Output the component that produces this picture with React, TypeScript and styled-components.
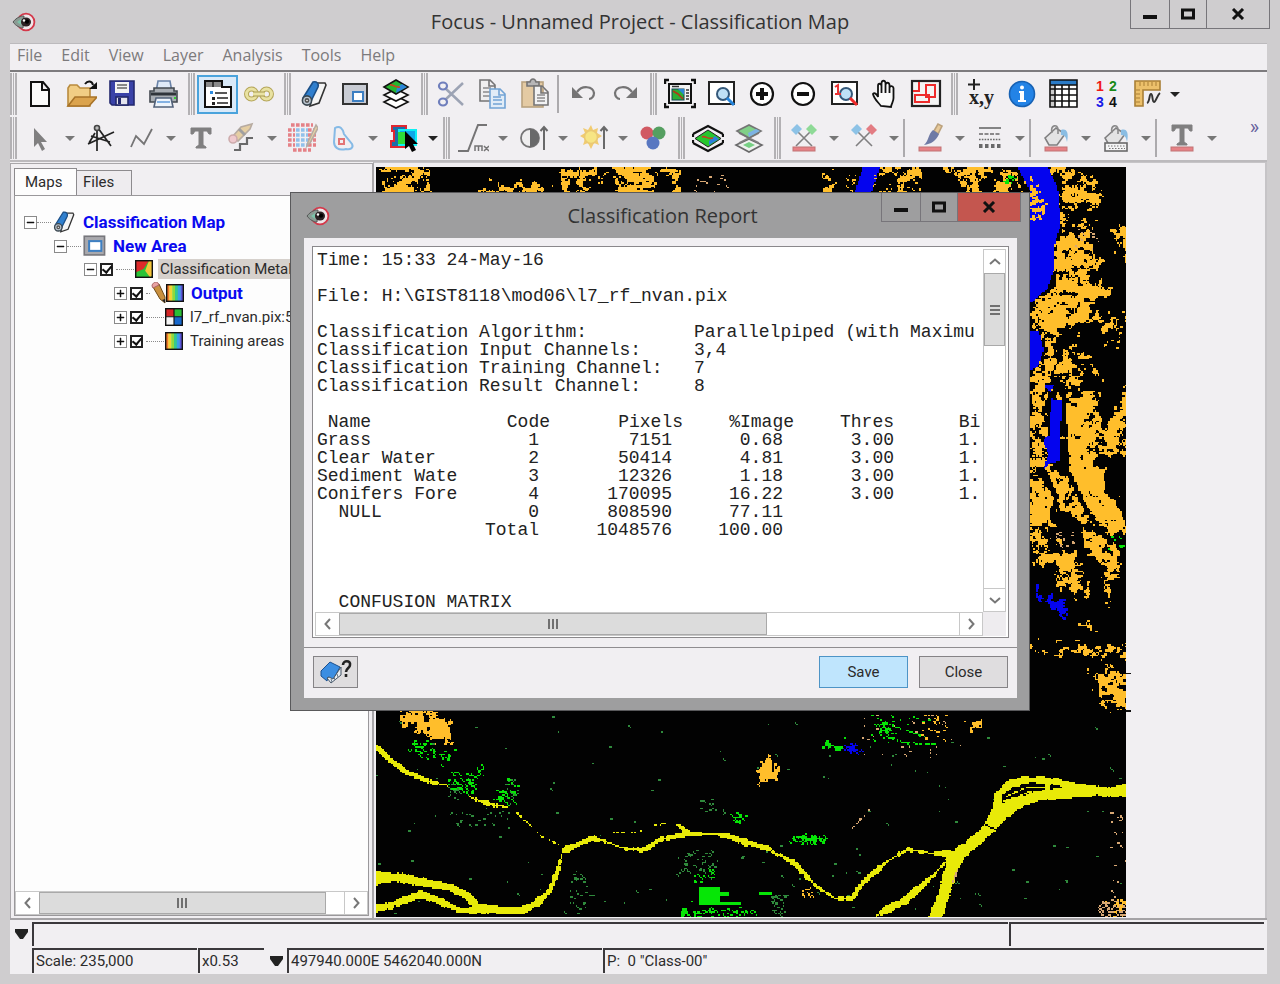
import React from "react";
import styled, { createGlobalStyle, css } from "styled-components";

const UI = '"Roboto", "Liberation Sans", sans-serif';
const SEGOE = '"Open Sans", "Noto Sans", sans-serif';
const MONO = '"Liberation Mono", monospace';

const Global = createGlobalStyle`
  * { box-sizing: border-box; }
  body { margin: 0; background: #cfcdcf; font-family: ${UI}; font-size: 15px; color: #2b2b2b; }
  button, input { font: inherit; color: inherit; }
`;

/* ---------- window frame ---------- */

const Window = styled.div`
  position: relative;
  min-height: 100vh;
  display: flex;
  flex-direction: column;
  padding: 0 13px 10px 10px;
`;

const TitleBar = styled.header`
  display: grid;
  grid-template-columns: 1fr auto 1fr;
  height: 43px;
  margin-right: -3px;
`;

const Title = styled.h1`
  margin: 0;
  align-self: center;
  font-family: ${SEGOE};
  font-weight: 400;
  font-size: 20px;
  line-height: 28px;
  color: #333;
  white-space: nowrap;
`;

const TitleIcon = styled.div`
  align-self: center;
  padding-left: 2px;
  line-height: 0;
`;

const CaptionButtons = styled.div`
  justify-self: end;
  align-self: start;
  display: flex;
  border: 1px solid #77757a;
  border-top: 0;
`;

const CaptionButton = styled.button<{ $width: number; $danger?: boolean }>`
  width: ${(p) => p.$width}px;
  height: 28px;
  padding: 0;
  display: grid;
  place-items: center;
  border: 0;
  border-left: 1px solid #77757a;
  background: ${(p) => (p.$danger ? "#c4564f" : "transparent")};
  &:first-child { border-left: 0; }
`;

const MenuBar = styled.nav`
  display: flex;
  align-items: flex-start;
  gap: 19px;
  height: 29px;
  padding: 0 7px;
  background: #f1eff2;
  border-top: 1px solid #bcbabd;
  border-bottom: 2px solid #7d7b7e;
  font-family: ${SEGOE};
  font-size: 16px;
`;

const MenuItem = styled.button`
  padding: 0;
  border: 0;
  background: none;
  color: #7c7a7c;
  line-height: 22px;
`;

/* ---------- toolbars ---------- */

const Toolbar = styled.div`
  display: flex;
  height: 44px;
  background: #f1eff2;
`;

const Group = styled.div<{ $tight?: boolean }>`
  display: flex;
  align-items: center;
  padding-right: ${(p) => (p.$tight ? 1 : 5)}px;
`;

const Grip = styled.span`
  width: 7px;
  height: 42px;
  margin-right: 2px;
  border-left: 2px solid #b3b1b4;
  border-right: 2px solid #b3b1b4;
  background: linear-gradient(90deg, transparent 1px, #b3b1b4 1px, #b3b1b4 2px, transparent 2px);
`;

const Divider = styled.span<{ $tight?: boolean }>`
  width: 2px;
  height: 38px;
  margin: 0 4px 0 ${(p) => (p.$tight ? 0 : 4)}px;
  background: #acaaad;
`;

const ToolButton = styled.button<{ $active?: boolean; $dim?: boolean }>`
  width: 41px;
  height: 39px;
  padding: 0;
  display: grid;
  place-items: center;
  border: 2px solid transparent;
  background: none;
  ${(p) => p.$active && css`border-color: #4aa3dc; background: #d9e9f8;`}
  svg { opacity: ${(p) => (p.$dim ? 0.65 : 1)}; }
`;

const DropButton = styled.button`
  width: 19px;
  height: 38px;
  padding: 0;
  display: grid;
  place-items: center;
  border: 0;
  background: none;
`;

const More = styled.button`
  margin-left: auto;
  align-self: start;
  padding: 3px 8px;
  border: 0;
  background: none;
  color: #66619c;
  font-size: 20px;
  line-height: 16px;
`;

/* ---------- work area ---------- */

const Work = styled.main`
  flex: 1;
  display: flex;
  background: #f1eff2;
  border-top: 2px solid #bcbabd;
  border-bottom: 2px solid #a5a3a6;
`;

const SidePanel = styled.aside`
  flex: 0 0 363px;
  display: flex;
  flex-direction: column;
  min-width: 0;
  padding: 4px 3px 2px 3px;
  border-top: 1px solid #a9a7aa;
  border-left: 1px solid #a9a7aa;
  border-right: 1px solid #a9a7aa;
  margin-top: 1px;
`;

const Tabs = styled.div`
  display: flex;
  align-items: flex-end;
`;

const Tab = styled.button<{ $on?: boolean }>`
  width: ${(p) => (p.$on ? 63 : 55)}px;
  height: ${(p) => (p.$on ? 28 : 25)}px;
  padding: 0 0 2px ${(p) => (p.$on ? 10 : 6)}px;
  border: 1px solid #8d8b8e;
  border-bottom: 0;
  border-left-width: ${(p) => (p.$on ? 1 : 0)}px;
  background: ${(p) => (p.$on ? "#fdfdfd" : "#eeecef")};
  margin-bottom: ${(p) => (p.$on ? -1 : 0)}px;
  text-align: left;
`;

const TreeBox = styled.div`
  flex: 1;
  display: flex;
  flex-direction: column;
  justify-content: space-between;
  border: 1px solid #9a989b;
  background: #fdfdfd;
`;

const Tree = styled.ul`
  list-style: none;
  margin: 0;
  padding: 14px 0 0 9px;
  overflow: hidden;
`;

const TreeRow = styled.li<{ $level: number }>`
  display: flex;
  align-items: center;
  height: 24px;
  padding-left: ${(p) => p.$level * 30}px;
  margin-bottom: ${(p) => (p.$level === 1 ? -1 : 0)}px;
`;

const Expander = styled.button`
  flex: none;
  width: 13px;
  height: 13px;
  padding: 0;
  display: grid;
  place-items: center;
  border: 1px solid #8a8a8a;
  background: #fff;
`;

const Dots = styled.span<{ $w: number }>`
  flex: none;
  width: ${(p) => p.$w}px;
  margin-right: 1px;
  border-top: 1px dotted #8a8a8a;
`;

const Check = styled.input`
  flex: none;
  appearance: none;
  width: 13px;
  height: 13px;
  margin: 0 3px 0 3px;
  border: 2px solid #222;
  background: #fff;
  display: grid;
  place-items: center;
  &:checked::after {
    content: "";
    width: 4px;
    height: 7px;
    margin-top: -2px;
    border: solid #111;
    border-width: 0 2px 2px 0;
    transform: rotate(40deg);
  }
`;

const TreeIcon = styled.span<{ $w: number; $gap: number }>`
  flex: none;
  width: ${(p) => p.$w}px;
  display: flex;
  justify-content: flex-end;
  margin-right: ${(p) => p.$gap}px;
  svg { flex: none; }
`;

const TreeLabel = styled.span<{ $bold?: boolean; $selected?: boolean }>`
  white-space: nowrap;
  line-height: 20px;
  padding: 0 2px;
  margin-left: -2px;
  ${(p) => p.$bold && css`font-weight: 700; font-size: 17px; color: #0a0af0;`}
  ${(p) => p.$selected && css`background: #d6d1cc; padding-right: 60px;`}
`;

const MapPane = styled.section`
  flex: 1;
  min-width: 0;
  padding: 4px 0 0 2px;
  border-left: 1px solid #a9a7aa;
  border-top: 1px solid #c6c4c7;
  border-right: 2px solid #c6c4c7;
  line-height: 0;
  overflow: hidden;
`;

/* ---------- scroll bars ---------- */

const HBar = styled.div`
  display: flex;
  height: 24px;
  border: 1px solid #c8c8c8;
  background: #fff;
`;

const VBar = styled.div`
  display: flex;
  flex-direction: column;
  width: 23px;
  border: 1px solid #c8c8c8;
  background: #fff;
`;

const ArrowButton = styled.button`
  flex: none;
  width: 23px;
  height: 22px;
  padding: 0;
  display: grid;
  place-items: center;
  border: 0;
  background: #fff;
`;

const UpArrow = styled(ArrowButton)`
  width: 21px;
  height: 23px;
`;

const Thumb = styled.div<{ $pct?: number; $h?: number }>`
  display: grid;
  place-items: center;
  border: 1px solid #a9a9a9;
  background: #dcdcdc;
  ${(p) => (p.$pct ? css`width: ${p.$pct}%;` : css`height: ${p.$h}px;`)}
`;

const Track = styled.div`
  flex: 1;
  display: flex;
`;

const EndArrow = styled(ArrowButton)`
  border-left: 1px solid #c8c8c8;
`;

const DownArrow = styled(UpArrow)`
  border-top: 1px solid #c8c8c8;
`;

/* ---------- status bar ---------- */

const StatusBar = styled.footer`
  display: grid;
  grid-template-columns: 22px 1fr;
  row-gap: 2px;
  padding: 2px 2px 1px 0;
  background: #f1eff2;
`;

const StatusDrop = styled.button`
  padding: 0;
  border: 0;
  background: none;
  display: grid;
  place-items: center;
`;

const StatusRow = styled.div`
  display: flex;
`;

const StatusCell = styled.div<{ $w?: number; $upper?: boolean }>`
  ${(p) => (p.$w ? css`flex: 0 0 ${p.$w}px;` : css`flex: 1;`)}
  height: ${(p) => (p.$upper ? 24 : 25)}px;
  margin-right: 1px;
  padding-left: 2px;
  border-top: 2px solid #3a383b;
  border-left: 2px solid #3a383b;
  line-height: 23px;
  white-space: pre;
`;

const Gap = styled.div`
  flex: 0 0 22px;
  display: grid;
  place-items: center;
`;

/* ---------- dialog ---------- */

const Dialog = styled.section`
  position: absolute;
  left: 290px;
  top: 192px;
  width: 740px;
  padding: 0 12px 12px 13px;
  border: 1px solid #59595b;
  background: #9e9e9f;
`;

const DialogTitle = styled(TitleBar)`
  height: 45px;
  margin-right: -4px;
`;

const DialogBody = styled.div`
  background: #f1eff2;
`;

const ReportFrame = styled.div`
  padding: 8px 8px 9px;
  border-bottom: 1px solid #8f8d90;
`;

const ReportBox = styled.div`
  display: grid;
  grid-template-columns: 1fr 23px;
  grid-template-rows: 363px 24px;
  height: 392px;
  padding: 2px;
  border: 1px solid #8a888b;
  background: #fff;
`;

const Report = styled.div`
  overflow: hidden;
  padding: 2px 0 0 2px;
  font-family: ${MONO};
  font-size: 18px;
  line-height: 18px;
  color: #222;
  white-space: pre;
`;

const ReportLine = styled.p`
  margin: 0 0 18px;
`;

const Facts = styled.dl`
  display: grid;
  grid-template-columns: 377px 1fr;
  margin: 0 0 18px;
  dd { margin: 0; }
`;

const Stats = styled.table`
  table-layout: fixed;
  width: 700px;
  border-collapse: collapse;
  margin-bottom: 54px;
  th, td { padding: 0; font-weight: 400; text-align: right; line-height: 18px; }
  td:not(:first-child) { padding-right: 11px; }
  th:first-child, td:first-child, th:last-child, td:last-child { text-align: left; }
  th:nth-child(5), td:nth-child(5) { padding-right: 0; }
`;

const Corner = styled.div`
  background: #eeecef;
`;

const DialogFooter = styled.div`
  display: flex;
  align-items: center;
  gap: 11px;
  padding: 8px 9px 10px;
`;

const PushButton = styled.button<{ $default?: boolean; $w: number }>`
  width: ${(p) => p.$w}px;
  height: 32px;
  padding: 0;
  display: grid;
  place-items: center;
  border: 1px solid ${(p) => (p.$default ? "#4d94c6" : "#858386")};
  background: ${(p) => (p.$default ? "#bfe5fd" : "#dfdddf")};
`;

const Spacer = styled.span`
  flex: 1;
`;

/* ---------- glyphs ---------- */

type Glyph = React.ReactNode;
const Svg = ({ children, s = 32 }: { children: Glyph; s?: number }) => (
  <svg width={s} height={s} viewBox="0 0 32 32" fill="none" stroke="#222" strokeWidth="1.6" aria-hidden="true">
    {children}
  </svg>
);

const Eye = () => (
  <svg width="24" height="20" viewBox="0 0 24 20" aria-hidden="true">
    <circle cx="14" cy="10" r="8.4" fill="#eee7ea" stroke="#d4384a" strokeWidth="1.8" />
    <path d="M1 10C5 5 9 4 12 4l-1 12C8 16 4 14 1 10z" fill="#8b9a93" stroke="#555" />
    <path d="M5 10l4-3v6z" fill="#7cc3a9" />
    <ellipse cx="14" cy="10" rx="5" ry="4.500" fill="#2c2224" />
    <circle cx="15" cy="9.600" r="2.200" fill="#000" />
    <circle cx="12" cy="8.500" r="1.200" fill="#fff" />
  </svg>
);

const Caret = ({ dark }: { dark?: boolean }) => (
  <svg width="10" height="5" viewBox="0 0 10 5" aria-hidden="true">
    <path d="M0 0h10L5 5z" fill={dark ? "#222" : "#777"} />
  </svg>
);

const StatusCaret = () => (
  <svg width="13" height="10" viewBox="0 0 13 10" aria-hidden="true">
    <path d="M0 0h13v3L8 10H5L0 3z" fill="#222" />
  </svg>
);

const Chevron = ({ turn }: { turn: number }) => (
  <svg width="12" height="12" viewBox="0 0 12 12" fill="none" stroke="#777" strokeWidth="2" aria-hidden="true">
    <path d="M8 1L3.500 6 8 11" transform={`rotate(${turn} 6 6)`} />
  </svg>
);

const ThumbMark = ({ turn = 0 }: { turn?: number }) => (
  <svg width="12" height="12" viewBox="0 0 12 12" aria-hidden="true">
    <path d="M1 1h2v10H1zM5 1h2v10H5zM9 1h2v10H9z" fill="#707070" transform={`rotate(${turn} 6 6)`} />
  </svg>
);

const roll = (
  <>
    <path d="M17 5h10l1 2-7 18-9 3z" fill="#f4f4f4" stroke="#333" />
    <path d="M5 20L15 4c4-1 6 2 5 5L12 25z" fill="#2f7fce" stroke="#1c4f86" />
    <circle cx="9" cy="22.500" r="4.600" fill="#b9c4cf" stroke="#39464f" />
    <circle cx="9" cy="22.500" r="1.600" fill="#fff" stroke="#555" />
  </>
);
const area = (
  <>
    <rect x="4" y="6" width="24" height="20" fill="#c9ccd4" stroke="#333" strokeWidth="2" />
    <rect x="14" y="14" width="10" height="9" fill="#fff" stroke="#3d7fc2" strokeWidth="2" />
  </>
);
const bucket = (
  <>
    <path d="M5 16L16 6l9 6-8 11H9z" fill="#ddd" stroke="#444" />
    <path d="M12 11c-2-8 6-10 6-3v4" stroke="#555" />
    <path d="M21 8c6-2 8 3 6 12-1-5-2-7-6-7z" fill="#54a3dc" stroke="none" />
  </>
);
const lens = (color: string) => (
  <>
    <rect x="4" y="4" width="25" height="22" fill="#fff" strokeWidth="2" />
    <circle cx="18" cy="16" r="6" fill="#bfe0f6" stroke="#34587a" strokeWidth="2" />
    <path d="M22 20l7 7" stroke={color} strokeWidth="3" />
  </>
);
const flags = (b: string) => (
  <>
    <path d="M8 8l16 16M24 8L8 24" stroke="#444" />
    <path d="M3 8l6-6 5 5-6 6z" fill="#58abe0" stroke="none" />
    <path d="M29 8l-6-6-5 5 6 6z" fill={b} stroke="none" />
  </>
);
const redBar = <rect x="5" y="25" width="22" height="4" fill="#e2474d" stroke="#a33" strokeWidth="1" />;
const bigT = (y: number) => (
  <path d={`M6 ${y}h20v6h-2l-2-3h-4v14l3 2v1H11v-1l3-2V${y + 3}h-4l-2 3H6z`} fill="#444" stroke="#444" strokeWidth="1" />
);

const icons: Record<string, Glyph> = {
  new: (
    <path d="M7 4h12l6 7v17H7z M18 4v8h7" fill="#fafafa" stroke="#111" strokeWidth="2" />
  ),
  open: (
    <>
      <path d="M3 28V10l2-3h7l3 3h10v18z" fill="#f1cd84" stroke="#b98b3e" />
      <path d="M3 28l7-9h22l-8 9z" fill="#dba34d" stroke="#a87328" />
      <path d="M20 6c3-4 7-3 8 1" stroke="#111" strokeWidth="2" />
      <path d="M32 4v7h-8z" fill="#111" stroke="none" />
    </>
  ),
  save: (
    <>
      <path d="M4 3h24v24H6l-2-2z" fill="#3a42a8" stroke="#23286e" />
      <rect x="9" y="4" width="14" height="11" fill="#f3f3f3" stroke="none" />
      <path d="M11 7h10M11 10h10" stroke="#666" />
      <rect x="10" y="19" width="12" height="8" fill="#e4e4ee" stroke="#22276a" />
      <rect x="12" y="20" width="3" height="6" fill="#23286e" stroke="none" />
    </>
  ),
  print: (
    <>
      <path d="M9 14L11 3h12l2 11z" fill="#dfeaf8" stroke="#6a83a8" />
      <path d="M3 13h4v-3h20v3h3v11H3z" fill="#a8adb3" stroke="#42484f" />
      <path d="M4 16h25" stroke="#2f343a" strokeWidth="3" />
      <path d="M9 20h15l2 9H7z" fill="#eef4fb" stroke="#52617a" />
      <path d="M10 24h13" stroke="#6aa0dc" />
      <rect x="27" y="19" width="2" height="2" fill="#3c3" stroke="none" />
    </>
  ),
  list: (
    <>
      <path d="M3 3h17v6h9v20H3z" fill="#fff" stroke="#111" strokeWidth="2" />
      <path d="M4 4h15v5H4z" fill="#8a8a8a" stroke="none" />
      <path d="M11 4v5M13 15h12M15 20h11M15 25h11" stroke="#222" strokeWidth="1.500" />
      <path d="M8 13h3v3H8z" fill="#2f8ce0" stroke="none" />
      <path d="M10 19h3v3h-3zM10 24h3v3h-3z" fill="#222" stroke="none" />
    </>
  ),
  link: (
    <>
      <rect x="3.500" y="11" width="10" height="10" rx="5" stroke="#b5a65a" strokeWidth="5" />
      <rect x="18.500" y="11" width="10" height="10" rx="5" stroke="#b5a65a" strokeWidth="5" />
      <rect x="3.500" y="11" width="10" height="10" rx="5" stroke="#e9e2a2" strokeWidth="3" />
      <rect x="18.500" y="11" width="10" height="10" rx="5" stroke="#e9e2a2" strokeWidth="3" />
      <path d="M10 16h12" stroke="#a89a52" strokeWidth="5" />
      <path d="M10 16h12" stroke="#e9e2a2" strokeWidth="3" />
    </>
  ),
  roll,
  area,
  layers: (
    <>
      <path d="M4 24l12-6 12 6-12 6z" fill="#fff" stroke="#111" />
      <path d="M4 17l12-6 12 6-12 6z" fill="#fff" stroke="#111" />
      <path d="M4 9l12-7 12 7-12 7z" fill="#27b52f" stroke="#111" />
      <path d="M16 15l11-6-5-3-5 3z" fill="#2c86d8" stroke="none" />
      <path d="M10 7c3-1 5 3 10 2" stroke="#c8461d" />
    </>
  ),
  cut: (
    <>
      <path d="M28 5L10 22M28 27L10 10" stroke="#707c94" strokeWidth="2.500" />
      <ellipse cx="8" cy="8" rx="4" ry="3.500" stroke="#2a43a0" strokeWidth="2.200" />
      <ellipse cx="8" cy="24" rx="4" ry="3.500" stroke="#2a43a0" strokeWidth="2.200" />
    </>
  ),
  copy: (
    <>
      <path d="M4 2h10l5 5v16H4zM13 2v6h6" fill="#eee" stroke="#333" />
      <path d="M7 10h8M7 14h8M7 18h8" stroke="#555" />
      <path d="M14 11h10l5 5v14H14zM23 11v6h6" fill="#d9ebfb" stroke="#2f7cc6" />
      <path d="M17 19h8M17 22h9M17 26h9" stroke="#2f7cc6" />
    </>
  ),
  paste: (
    <>
      <rect x="5" y="4" width="21" height="25" fill="#deb77a" stroke="#9c7a42" />
      <path d="M10 8V4h3c1-4 5-4 6 0h3v4z" fill="#999" stroke="#333" />
      <path d="M17 8h8l6 6v13H17zM24 8v7h7" fill="#f4f4f4" stroke="#333" />
      <path d="M20 17h8M20 20h8M20 23h8" stroke="#555" />
    </>
  ),
  undo: (
    <>
      <path d="M9 14c5-7 16-6 17 1 0 3-2 6-5 6" stroke="#333" strokeWidth="2.200" />
      <path d="M4 9v11h11z" fill="#333" stroke="none" />
    </>
  ),
  redo: (
    <>
      <path d="M23 14c-5-7-16-6-17 1 0 3 2 6 5 6" stroke="#333" strokeWidth="2.200" />
      <path d="M28 9v11H17z" fill="#333" stroke="none" />
    </>
  ),
  fit: (
    <>
      <path d="M1 6V2h4M27 2h4v4M31 25v4h-4M5 29H1v-4" stroke="#111" strokeWidth="2.400" />
      <rect x="5" y="6" width="22" height="19" fill="#f3f3f3" stroke="#111" strokeWidth="2" />
      <rect x="8" y="11" width="12" height="11" fill="#2cae34" stroke="#145" strokeWidth="1" />
      <path d="M14 11h6v6z" fill="#2b86d6" stroke="none" />
      <path d="M9 13l5 3 5 5" stroke="#b2351b" />
      <path d="M8 8.500h7M22 12h3M22 15h3M22 18h3M22 21h3" stroke="#333" />
    </>
  ),
  zoomArea: lens("#2484dc"),
  zoomIn: (
    <>
      <circle cx="16" cy="16" r="11" fill="#fff" stroke="#111" strokeWidth="2.200" />
      <path d="M10 16h12M16 10v12" stroke="#111" strokeWidth="4" />
    </>
  ),
  zoomOut: (
    <>
      <circle cx="16" cy="16" r="11" fill="#fff" stroke="#111" strokeWidth="2.200" />
      <path d="M10 16h12" stroke="#111" strokeWidth="4" />
    </>
  ),
  zoomOne: (
    <>
      {lens("#f02a2a")}
      <path d="M7 9l3-2v9M7 16h6" stroke="#e33" strokeWidth="2" />
    </>
  ),
  hand: (
    <path
      d="M12 28c-3-4-7-7-8-12 1-2 4 0 5 3V8c0-3 3-3 3.500 0v-3c.5-3 3.500-3 4 0v2c.5-3 3.500-3 4 0v3c.5-3 3.500-2 4 0v10c0 4-2 5-2.500 9zM12.500 8v7M16.500 7v8M20.500 9v6"
      fill="#fafafa" stroke="#111" strokeWidth="1.800"
    />
  ),
  extent: (
    <>
      <rect x="2" y="3" width="28" height="25" fill="#f4f4f4" stroke="#222" strokeWidth="2.200" />
      <path d="M9 4v9H3M16 7h9v12h-9zM5 17h14v7H5z" stroke="#ee2b2b" strokeWidth="2" />
    </>
  ),
  info: (
    <>
      <circle cx="16" cy="16" r="12.500" fill="#2383e6" stroke="#1862b4" />
      <circle cx="16" cy="9.500" r="2" fill="#fff" stroke="none" />
      <path d="M13 13h5v9h2v2h-8v-2h2v-7h-1z" fill="#fff" stroke="none" />
    </>
  ),
  table: (
    <>
      <rect x="3" y="2" width="27" height="27" fill="#fff" stroke="none" />
      <rect x="3" y="2" width="27" height="5" fill="#2b7cc8" stroke="none" />
      <rect x="3" y="7" width="5" height="22" fill="#ccc" stroke="none" />
      <path d="M3 2h27v27H3zM3 7h27M3 11h27M3 17h27M3 23h27M8 7v22M15 7v22M22 7v22" stroke="#111" />
    </>
  ),
  ruler: (
    <>
      <path d="M6 3h25v9H14v16H6z" fill="#ecc06b" stroke="#a97f36" />
      <path d="M11 4v4M15 4v4M19 4v4M23 4v4M27 4v4M7 12h4M7 16h4M7 20h4M7 24h4" stroke="#a97f36" strokeWidth="1" />
      <path d="M18 25c3-1 2-9 4-9s1 8 3 8 3-7 6-9" stroke="#333" strokeWidth="2" />
    </>
  ),
  pointer: <path d="M10 6v19l4-4 4 8 3-2-4-7h6z" fill="#444" stroke="none" />,
  compass: (
    <>
      <path d="M13 5v24M14 6l13 18M11 11L5 21M4 22l26-12M7 14l19 6" stroke="#222" strokeWidth="1.700" />
      <circle cx="13" cy="6" r="2.500" fill="#bbb" stroke="#444" />
    </>
  ),
  line: <path d="M6 25l5-11 8 8 8-15" stroke="#333" strokeWidth="1.800" />,
  text: bigT(6),
  erase: (
    <>
      <path d="M7 14L15 5l11-3-2 5-12 12z" fill="#e0bd7a" stroke="#987" />
      <path d="M13 7l6 6" stroke="#777" strokeWidth="3" />
      <circle cx="7" cy="17" r="4" fill="#efb5bb" stroke="#b88" />
      <path d="M27 13h-6v6h-7v6H8" stroke="#222" strokeWidth="2.200" transform="translate(0 3)" />
    </>
  ),
  grid: (
    <>
      <path d="M5 3h22M2 8h28M2 13h28M2 18h28M2 23h28M7 28h18" stroke="#e0474e" strokeWidth="3.600" strokeDasharray="3.600 1.400" />
      <path d="M9 8h13M9 13h13M9 18h13M9 23h13" stroke="#f1eff2" strokeWidth="4" />
      <path d="M10 8h12M10 13h12M10 18h12M10 23h12" stroke="#5fa9e8" strokeWidth="3.600" strokeDasharray="3.600 1.400" />
      <path d="M30 3L22 20l-1 4 3-3 8-15z" fill="#e3c47d" stroke="#987" />
    </>
  ),
  lasso: (
    <>
      <path d="M8 6c5-3 8 1 9 6l8 10c2 4-2 6-6 5-8 2-12-2-12-7z" stroke="#4d9fe0" strokeWidth="2" />
      <rect x="12" y="17" width="5" height="5" stroke="#d33" strokeWidth="2" />
    </>
  ),
  rgb: (
    <>
      <path d="M5 4h14v16h-2v5H4v-6h3V9H5z" fill="#1c6ea8" stroke="#e02731" strokeWidth="2" />
      <rect x="12" y="8" width="17" height="15" fill="#10a8e8" stroke="#0cf0f4" strokeWidth="2" />
      <rect x="11" y="10" width="8" height="12" fill="#2edc36" stroke="none" />
      <path d="M18 9v18l4-3 3 6 4-2-3-6h5z" fill="#000" stroke="none" />
    </>
  ),
  ramp: (
    <>
      <path d="M1 29h10L21 3h9" stroke="#333" strokeWidth="2" />
      <path d="M18 29v-5h7v5M21.500 24v5M27 24l5 5M32 24l-5 5" stroke="#333" strokeWidth="1.500" />
    </>
  ),
  contrast: (
    <>
      <circle cx="13" cy="16" r="9" fill="#eee" stroke="#333" strokeWidth="1.800" />
      <path d="M13 7a9 9 0 0 1 0 18z" fill="#222" stroke="none" />
      <path d="M27 28V6M23.500 9L27 5l3.500 4" stroke="#222" strokeWidth="2" />
    </>
  ),
  sun: (
    <>
      <path d="M14 3l2 5 5-2-1 5 5 3-5 3 2 6-5-2-3 6-3-6-5 2 2-6-5-3 5-3-2-5 5 2z" fill="#f2b92c" stroke="none" />
      <circle cx="14" cy="15" r="6.500" fill="#fbe04a" stroke="#e7b632" />
      <path d="M27 27V6M23.500 9L27 5l3.500 4" stroke="#222" strokeWidth="2" />
    </>
  ),
  balls: (
    <>
      <circle cx="10" cy="11" r="6.500" fill="#c00a18" stroke="none" />
      <circle cx="22" cy="11" r="6.500" fill="#027514" stroke="none" />
      <circle cx="16" cy="21" r="6.500" fill="#0838a8" stroke="none" />
    </>
  ),
  layer: (
    <>
      <path d="M1 12L16 4l15 8M1 21l15 8 15-8M1 12v3M31 12v3M1 18v3M31 18v3" stroke="#111" strokeWidth="2.200" />
      <path d="M3 16.500L16 8l13 8.500L16 25z" fill="#27c62e" stroke="#222" strokeWidth="1" />
      <path d="M17 23l10-6-4-3-6 5z" fill="#2a7fdc" stroke="none" />
      <path d="M10 15c4-2 5 3 11 1" stroke="#c2431c" />
    </>
  ),
  layerPair: (
    <>
      <path d="M3 23l13-6 13 6-13 7z" fill="#eef4ee" stroke="#222" />
      <path d="M10 23l6-3 6 3-6 3z" fill="#37c04a" stroke="none" />
      <path d="M6 11l20 10M26 11L6 21" stroke="#444" />
      <path d="M4 9l12-6 12 6-12 7z" fill="#46c050" stroke="#333" />
      <path d="M16 15l11-6-4-2-8 4z" fill="#3f93dd" stroke="none" />
    </>
  ),
  flagA: <>{flags("#5ccf68")}{redBar}</>,
  flagB: flags("#dc4048"),
  brush: (
    <>
      <path d="M20 9l4-7 4 2-4 8z" fill="#e3b56b" stroke="#a07a40" />
      <path d="M19 8l6 4c-3 7-8 10-15 11 5-4 4-11 9-15z" fill="#2b3c7c" stroke="none" />
      {redBar}
    </>
  ),
  dashes: (
    <>
      <path d="M5 6h22" stroke="#222" />
      <path d="M5 12h22" stroke="#222" strokeDasharray="4 1.500" />
      <path d="M5 17.500h22" stroke="#222" strokeDasharray="1.600 1.200" />
      <path d="M5 24h22" stroke="#222" strokeWidth="4" strokeDasharray="3.500 2.500" />
    </>
  ),
  fillA: <>{bucket}{redBar}</>,
  fillB: (
    <>
      {bucket}
      <rect x="5" y="21" width="22" height="8" fill="#f7f7f7" />
      <path d="M8 24h17M9 26.500h16" stroke="#333" strokeWidth="1" strokeDasharray="1.500 1.500" />
    </>
  ),
  textColor: <>{bigT(3)}{redBar}</>,
  meta: (
    <>
      <rect x="1" y="1" width="30" height="30" fill="#2bc336" stroke="none" />
      <path d="M1 1h24L15 16 1 22z" fill="#dd2a2a" stroke="none" />
      <path d="M25 1h6v26l-4 4-9-12z" fill="#f3c53a" stroke="none" />
      <rect x="1" y="1" width="30" height="30" stroke="#111" strokeWidth="3" />
    </>
  ),
  quad: (
    <>
      <rect x="1" y="1" width="30" height="30" fill="#f5f5f5" stroke="none" />
      <rect x="1" y="1" width="15" height="14" fill="#d32626" stroke="none" />
      <rect x="16" y="1" width="15" height="14" fill="#2abf36" stroke="none" />
      <rect x="16" y="15" width="15" height="16" fill="#1768cc" stroke="none" />
      <path d="M16 1v30M1 15.500h30" stroke="#111" strokeWidth="2" />
      <rect x="1" y="1" width="30" height="30" stroke="#111" strokeWidth="3" />
    </>
  ),
  rainbow: (
    <>
      {["#f07a2a", "#f2d334", "#8fd93c", "#36c98c", "#39a0e8", "#5a55d8"].map((c, i) => (
        <rect key={c} x={1 + i * 5} y="1" width="5.500" height="30" fill={c} stroke="none" />
      ))}
      <rect x="1" y="1" width="30" height="30" stroke="#111" strokeWidth="3" />
    </>
  ),
  frame: (
    <>
      <rect x="4" y="4" width="25" height="23" fill="#a9a9ad" stroke="#77777c" strokeWidth="2" />
      <rect x="10" y="10" width="15" height="12" fill="#fff" stroke="#3d7fc2" strokeWidth="2.500" />
    </>
  ),
};

const XyIcon = () => (
  <svg width="32" height="32" viewBox="0 0 32 32" aria-hidden="true">
    <path d="M9 1v11M3 6.500h12" stroke="#222" strokeWidth="2" />
    <text x="4" y="26" fontFamily="Liberation Serif, serif" fontWeight="700" fontSize="20" fill="#222">x,y</text>
  </svg>
);

const DigitsIcon = () => (
  <svg width="32" height="32" viewBox="0 0 32 32" aria-hidden="true" fontFamily="Liberation Sans, sans-serif" fontWeight="700" fontSize="14">
    <text x="8" y="13" fill="#f01818">1</text>
    <text x="21" y="13" fill="#188a18">2</text>
    <text x="8" y="29" fill="#1818e8">3</text>
    <text x="21" y="29" fill="#111">4</text>
  </svg>
);

/* ---------- toolbar contents ---------- */

type ToolItem = { id: string; label: string; dim?: boolean; active?: boolean; drop?: boolean; dark?: boolean };
type Tool = ToolItem | "|";
const t = (id: string, label: string, marks = ""): Tool => ({
  id, label,
  dim: marks.includes("d"), active: marks.includes("a"), drop: marks.includes("v"), dark: marks.includes("b"),
});

const topTools: Tool[][] = [
  [t("new", "New project"), t("open", "Open"), t("save", "Save"), t("print", "Print")],
  [t("list", "Show tree", "a"), t("link", "Link")],
  [t("roll", "New map"), t("area", "New area"), t("layers", "New layer")],
  [t("cut", "Cut", "d"), t("copy", "Copy", "d"), t("paste", "Paste", "d"), "|", t("undo", "Undo", "d"), t("redo", "Redo", "d")],
  [t("fit", "Overview"), t("zoomArea", "Zoom to area"), t("zoomIn", "Zoom in"), t("zoomOut", "Zoom out"), t("zoomOne", "Zoom one to one"), t("hand", "Pan"), t("extent", "Extents")],
  [t("xy", "Coordinates"), t("info", "Information"), t("table", "Attributes"), t("digits", "Numeric values"), t("ruler", "Measure", "vb")],
];

const lowTools: Tool[][] = [
  [t("pointer", "Select", "dv"), t("compass", "Edit vertices"), t("line", "New line", "dv"), t("text", "New text", "d"), t("erase", "Reshape", "dv"), t("grid", "Raster edit", "d"), t("lasso", "Trace", "dv"), t("rgb", "Pick colour", "vb")],
  [t("ramp", "Enhance", "dv"), t("contrast", "Contrast", "dv"), t("sun", "Brightness", "dv"), t("balls", "Colours", "d")],
  [t("layer", "Layer view"), t("layerPair", "Compare layers", "d")],
  [t("flagA", "Line start", "dv"), t("flagB", "Line end", "dv"), "|", t("brush", "Line colour", "dv"), t("dashes", "Line style", "dv"), "|", t("fillA", "Fill colour", "dv"), t("fillB", "Fill pattern", "dv"), "|", t("textColor", "Text colour", "dv")],
];

const hasDrop = (tool?: Tool) => !!tool && tool !== "|" && !!tool.drop;

const ToolGroup = ({ tools }: { tools: Tool[] }) => (
  <Group $tight={hasDrop(tools[tools.length - 1])}>
    <Grip />
    {tools.map((x, i) =>
      x === "|" ? (
        <Divider key={i} $tight={hasDrop(tools[i - 1])} />
      ) : (
        <React.Fragment key={x.id}>
          <ToolButton aria-label={x.label} $dim={x.dim} $active={x.active}>
            {x.id === "xy" ? <XyIcon /> : x.id === "digits" ? <DigitsIcon /> : <Svg>{icons[x.id]}</Svg>}
          </ToolButton>
          {x.drop && (
            <DropButton aria-label={x.label + " options"}>
              <Caret dark={x.dark} />
            </DropButton>
          )}
        </React.Fragment>
      ),
    )}
  </Group>
);

const Caption = ({ danger }: { danger?: boolean }) => (
  <CaptionButtons>
    <CaptionButton $width={38} aria-label="Minimize">
      <svg width="14" height="14"><path d="M0 8h14v4H0z" fill="#111" /></svg>
    </CaptionButton>
    <CaptionButton $width={37} aria-label="Maximize">
      <svg width="14" height="12"><rect x="1.500" y="2" width="11" height="8" fill="none" stroke="#111" strokeWidth="3" /></svg>
    </CaptionButton>
    <CaptionButton $width={63} $danger={danger} aria-label="Close window">
      <svg width="14" height="12"><path d="M2 1l10 10M12 1L2 11" stroke="#111" strokeWidth="3" /></svg>
    </CaptionButton>
  </CaptionButtons>
);

/* ---------- classified raster ---------- */

const N = 500;
const COLORS = ["", "#ffbe2b", "#0404ee", "#06e606", "#e8ea08", "#2f8a3c", "#d8a874"];
type P = [number, number];

const buildRaster = () => {
  const cells = new Uint8Array(N * N);
  let seed = 20160524;
  const rnd = () => {
    seed = (seed * 1664525 + 1013904223) >>> 0;
    return seed / 4294967296;
  };
  const lattice = (x: number, y: number) => {
    let h = (x * 374761393 + y * 668265263) | 0;
    h = Math.imul(h ^ (h >>> 13), 1274126177);
    return ((h ^ (h >>> 16)) >>> 0) / 4294967296;
  };
  const noise = (x: number, y: number) => {
    const xi = Math.floor(x), yi = Math.floor(y);
    const fx = x - xi, fy = y - yi;
    const a = lattice(xi, yi) * (1 - fx) + lattice(xi + 1, yi) * fx;
    const b = lattice(xi, yi + 1) * (1 - fx) + lattice(xi + 1, yi + 1) * fx;
    return a * (1 - fy) + b * fy;
  };
  const put = (x: number, y: number, c: number) => {
    x = Math.round(x); y = Math.round(y);
    if (x >= 0 && y >= 0 && x < N && y < N) cells[y * N + x] = c;
  };
  const poly = (pts: P[], c: number, density: number) => {
    const xs = pts.map((p) => p[0]), ys = pts.map((p) => p[1]);
    for (let y = Math.floor(Math.min(...ys)) - 4; y <= Math.max(...ys) + 4; y++)
      for (let x = Math.floor(Math.min(...xs)) - 4; x <= Math.max(...xs) + 4; x++) {
        const jx = x + (noise(x / 3, y / 3) - 0.5) * 9, jy = y + (noise(x / 3 + 50, y / 3) - 0.5) * 9;
        const useX = density < 1 ? jx : x, useY = density < 1 ? jy : y;
        let inside = false;
        for (let i = 0, j = pts.length - 1; i < pts.length; j = i++) {
          const [ax, ay] = pts[i], [bx, by] = pts[j];
          if (ay > useY !== by > useY && useX < ((bx - ax) * (useY - ay)) / (by - ay) + ax) inside = !inside;
        }
        if (!inside) continue;
        const v = 0.5 * noise(x / 5, y / 3.5) + 0.35 * noise(x / 1.8 + 90, y / 1.6) + 0.15 * rnd();
        if (density >= 1 || v < 0.28 + density * 0.46) put(x, y, c);
      }
  };
  const box = (a: P, b: P, c: number, d: number) => poly([a, [b[0], a[1]], b, [a[0], b[1]]], c, d);
  const river = (pts: [number, number, number][], c = 4) => {
    for (let i = 0; i + 1 < pts.length; i++) {
      const [x0, y0, w0] = pts[i], [x1, y1, w1] = pts[i + 1];
      const steps = Math.ceil(Math.hypot(x1 - x0, y1 - y0)) + 1;
      for (let s = 0; s <= steps; s++) {
        const k = s / steps, w = w0 + (w1 - w0) * k;
        if (w < 1 && rnd() > w) continue;
        const r = Math.max(0.4, w / 2 + (rnd() - 0.6) * 1.1);
        const cx = x0 + (x1 - x0) * k, cy = y0 + (y1 - y0) * k;
        for (let dy = -Math.ceil(r); dy <= r; dy++)
          for (let dx = -Math.ceil(r); dx <= r; dx++) if (dx * dx + dy * dy <= r * r) put(cx + dx, cy + dy, c);
      }
    }
  };
  const scatter = (a: P, b: P, n: number, c: number) => {
    for (let i = 0; i < n; i++) {
      const x = a[0] + rnd() * (b[0] - a[0]), y = a[1] + rnd() * (b[1] - a[1]);
      put(x, y, c);
      if (rnd() > 0.5) put(x + 1, y + (rnd() > 0.6 ? 1 : 0), c);
    }
  };
  const cloud = (c0: P, rx: number, ry: number, n: number, c: number) => {
    for (let i = 0; i < n; i++) {
      const a = rnd() * 6.283, r = rnd();
      const x = c0[0] + Math.cos(a) * r * rx, y = c0[1] + Math.sin(a) * r * ry;
      put(x, y, c);
      if (rnd() > 0.4) put(x + 1, y + (rnd() > 0.5 ? 1 : 0), c);
    }
  };

  /* northern edge */
  const T = (x: number, y: number): P => [x / 1.5, y / 1.5];
  box(T(2, -6), T(54, 30), 1, 0.5);
  poly([T(96, 30), T(112, 10), T(125, 18), T(170, 16), T(170, 30)], 1, 0.55);
  poly([T(188, -6), T(232, -6), T(228, 10), T(202, 30), T(180, 20)], 1, 0.48);
  box(T(238, -6), T(274, 30), 1, 0.7);
  box(T(276, -6), T(304, 30), 1, 0.35);
  box(T(448, -6), T(456, 30), 1, 0.35);
  scatter(T(315, 6), T(350, 26), 14, 6);
  scatter(T(465, 2), T(480, 24), 12, 1);
  poly([T(486, 0), T(503, 0), T(494, 26), T(477, 26)], 2, 1);
  box(T(500, -6), T(544, 30), 1, 0.45);
  poly([T(566, -6), T(600, -6), T(642, 8), T(645, 30), T(596, 30)], 1, 0.5);
  cloud(T(633, 10), 6, 6, 16, 3);

  /* eastern valley */
  const R = (x: number, y: number): P => [(634 + x / 3) / 1.5, (-7 + y / 2.904) / 1.5];
  poly([R(120, 10), R(180, 10), R(190, 60), R(285, 110), R(270, 130), R(190, 150), R(150, 200), R(140, 60)], 1, 0.6);
  box(R(210, 30), R(255, 85), 1, 0.32);
  box(R(150, 150), R(260, 190), 1, 0.22);
  poly([R(360, 150), R(360, 310), R(325, 270), R(300, 190)], 1, 0.5);
  poly([R(150, 210), R(230, 210), R(240, 260), R(280, 290), R(210, 330), R(310, 380), R(240, 410), R(130, 380), R(128, 250)], 1, 0.7);
  poly([R(60, 415), R(110, 380), R(200, 370), R(200, 420), R(275, 430), R(270, 465), R(130, 490), R(60, 490)], 1, 0.82);
  poly([R(85, 490), R(132, 490), R(130, 620), R(60, 610), R(98, 560)], 1, 0.66);
  box(R(280, 440), R(360, 535), 1, 0.35);
  box(R(165, 510), R(210, 540), 1, 0.35);
  poly([R(150, 550), R(220, 550), R(275, 630), R(180, 660), R(130, 640)], 1, 0.48);
  box(R(55, 610), R(110, 905), 1, 0.66);
  poly([R(150, 670), R(260, 680), R(270, 780), R(240, 900), R(170, 945), R(165, 780)], 1, 0.76);
  poly([R(360, 620), R(360, 850), R(270, 860), R(240, 800), R(310, 740)], 1, 0.58);
  poly([R(175, 900), R(280, 890), R(290, 970), R(330, 1000), R(345, 1070), R(300, 1095), R(175, 945)], 1, 0.94);
  poly([R(110, 890), R(165, 930), R(260, 1055), R(180, 1045), R(120, 950)], 1, 0.85);
  box(R(55, 915), R(125, 1060), 1, 0.88);
  poly([R(55, 1060), R(165, 1120), R(150, 1150), R(55, 1180)], 1, 0.48);
  poly([R(200, 1070), R(262, 1070), R(320, 1120), R(318, 1200), R(290, 1290), R(285, 1180), R(225, 1130)], 1, 0.8);
  poly([R(145, 1130), R(200, 1150), R(235, 1280), R(125, 1215)], 1, 0.75);
  box(R(55, 1400), R(240, 1432), 1, 0.35);
  box(R(215, 1400), R(360, 1475), 1, 0.36);
  poly([R(250, 1490), R(360, 1490), R(360, 1600), R(270, 1570)], 1, 0.64);
  box(R(210, 1340), R(242, 1358), 1, 0.5);
  scatter(R(110, 1080), R(200, 1120), 16, 6);
  scatter(R(290, 1090), R(340, 1130), 8, 3);
  poly([R(20, 20), R(112, 20), R(140, 80), R(150, 180), R(132, 240), R(130, 310), R(110, 370), R(60, 412), R(60, 90)], 2, 1);
  poly([R(45, 30), R(66, 60), R(104, 140), R(100, 172), R(60, 160)], 1, 0.62);
  poly([R(60, 495), R(84, 495), R(98, 550), R(80, 598), R(60, 606)], 2, 1);
  poly([R(98, 648), R(130, 648), R(118, 672)], 2, 1);
  poly([R(120, 690), R(152, 695), R(146, 870), R(112, 880), R(96, 900), R(112, 850), R(95, 810), R(116, 795)], 2, 1);
  river([[...R(156, 660), 3], [...R(168, 900), 3], [...R(230, 1020), 3], [...R(300, 1110), 3]], 0);
  river([[...R(96, 905), 4], [...R(135, 975), 4]], 0);
  poly([R(60, 1235), R(165, 1280), R(165, 1335), R(110, 1300)], 2, 0.46);
  scatter(R(190, 190), R(280, 260), 14, 6);

  /* southern plain */
  const L = (x: number, y: number): P => [(-6 + x / 3) / 1.5, (533 + y / 3) / 1.5];
  const M = (x: number, y: number): P => [(384 + x / 3) / 1.5, (533 + y / 3) / 1.5];
  poly([L(80, 20), L(165, 20), L(240, 60), L(235, 125), L(190, 110), L(150, 100), L(95, 85)], 1, 0.72);
  scatter(L(0, 40), L(1200, 640), 60, 5);
  cloud(L(145, 140), 9, 8, 34, 3);
  cloud(L(213, 160), 9, 7, 24, 3);
  cloud(L(252, 242), 5, 7, 24, 3);
  cloud(L(295, 245), 6, 9, 30, 3);
  cloud(L(325, 212), 5, 6, 14, 3);
  scatter(L(230, 250), L(270, 300), 14, 5);
  cloud(L(405, 278), 9, 11, 46, 3);
  scatter(L(400, 235), L(440, 310), 14, 5);
  scatter(L(230, 330), L(420, 380), 26, 5);
  cloud(L(1097, 351), 6, 4, 24, 3);
  scatter(L(980, 290), L(1070, 350), 12, 5);
  scatter(L(920, 455), L(1040, 520), 46, 5);
  scatter(L(970, 500), L(1035, 545), 18, 3);
  box(L(985, 560), L(1045, 613), 3, 1);
  box(L(1045, 572), L(1075, 587), 3, 1);
  box(L(1045, 605), L(1110, 613), 3, 1);
  box(L(930, 618), L(990, 655), 3, 0.6);
  scatter(L(990, 620), L(1155, 648), 46, 3);
  box(L(1165, 573), M(35, 580), 3, 1);
  scatter(L(595, 510), L(665, 645), 30, 5);
  scatter(M(0, 40), M(1100, 640), 75, 5);
  scatter(M(300, 40), M(600, 190), 28, 6);
  river([[...M(330, 42), 0.6], [...M(420, 85), 0.6], [...M(490, 105), 0.7]], 3);
  river([[...M(370, 105), 0.5], [...M(430, 125), 0.6], [...M(520, 130), 0.6]], 3);
  scatter(M(330, 40), M(520, 130), 26, 3);
  cloud(M(368, 80), 5, 4, 30, 3);
  box(M(190, 125), M(240, 145), 3, 0.8);
  cloud(M(275, 142), 6, 4, 44, 2);
  poly([M(25, 175), M(50, 185), M(50, 225), M(30, 245), M(-15, 235), M(0, 190)], 1, 0.9);
  box(M(620, 65), M(662, 90), 1, 0.7);
  scatter(M(480, 40), M(560, 120), 24, 1);
  cloud(M(140, 415), 13, 4, 80, 3);
  river([[...M(270, 385), 0.7], [...M(325, 328), 0.4]], 6);
  scatter(M(30, 580), M(75, 645), 34, 5);
  scatter(M(125, 560), M(160, 585), 16, 1);
  scatter(M(1010, 600), M(1100, 652), 70, 6);
  poly([M(1030, 620), M(1110, 590), M(1110, 660), M(1030, 660)], 1, 0.4);
  scatter(M(1040, 330), M(1100, 600), 22, 6);

  const run = (f: (x: number, y: number) => P, pts: [number, number, number][], c = 4) =>
    river(pts.map(([x, y, w]) => [...f(x, y), w] as [number, number, number]), c);
  run(L, [[15, 135, 3], [60, 180, 3.4], [110, 215, 3], [180, 243, 2.5], [235, 254, 0.9]]);
  run(L, [[295, 288, 0.6], [350, 308, 2.4], [410, 318, 1]]);
  run(L, [[430, 330, 0.6], [470, 365, 0.8], [510, 405, 0.3], [580, 440, 0.6]]);
  run(L, [[580, 448, 4.5], [630, 425, 2.5], [665, 412, 3.6], [700, 420, 1.5], [750, 440, 0.8], [815, 448, 3], [870, 415, 2.4], [950, 398, 3], [1020, 398, 0.9], [1070, 405, 3], [1130, 425, 4], [1200, 445, 2]]);
  run(L, [[920, 370, 1], [950, 395, 3]]);
  run(L, [[575, 455, 0.8], [555, 520, 3], [535, 570, 3], [500, 605, 4], [450, 630, 5], [390, 628, 5], [320, 618, 5], [290, 585, 4.6], [240, 560, 4], [160, 545, 5.5], [80, 528, 5.5], [15, 532, 8]]);
  run(L, [[15, 622, 5], [60, 612, 3.6], [150, 580, 4.5], [215, 605, 4], [270, 630, 3], [350, 628, 5]]);
  run(L, [[725, 396, 0.5], [790, 396, 0.3], [830, 378, 0.3], [880, 368, 0.4]]);
  run(M, [[0, 438, 2.5], [60, 465, 1.5], [100, 485, 3], [160, 550, 2], [220, 592, 1], [270, 594, 3], [310, 540, 2.5], [350, 505, 3.6], [380, 480, 1.3], [440, 445, 2], [500, 455, 1.2], [570, 460, 5]]);
  run(M, [[565, 470, 1.5], [520, 520, 1.6], [470, 565, 4], [430, 600, 4.5], [375, 628, 5], [345, 645, 0.7]]);
  run(M, [[520, 660, 8], [545, 590, 7.5], [575, 490, 8], [600, 455, 8], [650, 415, 7], [690, 375, 8], [715, 335, 11], [760, 310, 7], [830, 285, 6], [900, 278, 7], [1000, 270, 6], [1065, 272, 6], [1110, 272, 6]]);
  run(M, [[708, 315, 5], [712, 280, 4], [745, 250, 4.5], [800, 236, 4], [880, 240, 4], [940, 258, 5], [1000, 266, 5]]);
  run(M, [[1065, 262, 3], [1110, 250, 3]]);
  run(M, [[740, 285, 0.8], [800, 258, 0.8], [860, 262, 0.8]]);
  run(M, [[730, 300, 0.7], [800, 275, 0.8], [860, 270, 0.7]]);
  run(M, [[858, 244, 2], [862, 272, 2]]);
  run(M, [[665, 365, 1], [700, 385, 1]], 0);
  run(M, [[590, 505, 0.7], [575, 545, 0.6]], 6);

  return COLORS.map((_, c) => {
    if (!c) return "";
    let d = "";
    for (let y = 0; y < N; y++)
      for (let x = 0; x < N; x++)
        if (cells[y * N + x] === c) {
          let w = 1;
          while (x + w < N && cells[y * N + x + w] === c) w++;
          d += `M${x} ${y}h${w}v1h-${w}z`;
          x += w;
        }
    return d;
  });
};

const raster = buildRaster();

const ClassifiedMap = () => (
  <svg width="756" height="750" viewBox="0 0 504 500" shapeRendering="crispEdges" role="img" aria-label="Classified image">
    <rect width="500" height="500" fill="#020202" />
    {raster.map((d, i) => (i ? <path key={i} d={d} fill={COLORS[i]} /> : null))}
    <path d="M500 337h3v1h-3zM500 362h3v1h-3z" fill="#111" />
  </svg>
);

/* ---------- layer tree ---------- */

const Pencil = () => (
  <svg width="15" height="22" viewBox="0 0 15 22" aria-hidden="true">
    <path d="M2 5l6-3 6 13v6l-5-4z" fill="#c9903f" stroke="#6e4a18" />
    <path d="M1 4c0-3 4-5 6-3l1 2-6 3z" fill="#e9a3a3" stroke="#a66" />
    <path d="M11 18l3 3v-4z" fill="#222" />
  </svg>
);

type Node = { level: number; open: boolean; label: string; icon: string; kind?: "bold" | "selected"; check?: boolean; edit?: boolean };
const nodes: Node[] = [
  { level: 0, open: true, label: "Classification Map", icon: "roll", kind: "bold" },
  { level: 1, open: true, label: "New Area", icon: "frame", kind: "bold" },
  { level: 2, open: true, label: "Classification MetaL", icon: "meta", kind: "selected", check: true },
  { level: 3, open: false, label: "Output", icon: "rainbow", kind: "bold", check: true, edit: true },
  { level: 3, open: false, label: "l7_rf_nvan.pix:5", icon: "quad", check: true },
  { level: 3, open: false, label: "Training areas", icon: "rainbow", check: true },
];

const LayerTree = () => (
  <Tree>
    {nodes.map((n) => (
      <TreeRow key={n.label} $level={n.level}>
        <Expander aria-label={(n.open ? "Collapse " : "Expand ") + n.label}>
          <svg width="9" height="9"><path d={n.open ? "M1 4h7v1H1z" : "M1 4h7v1H1zM4 1h1v7H4z"} fill="#111" stroke="#111" strokeWidth=".5" /></svg>
        </Expander>
        {n.check && <Check type="checkbox" defaultChecked aria-label={n.label} />}
        <Dots $w={n.edit ? 4 : n.check ? 18 : 14} />
        {n.edit && <Pencil />}
        <TreeIcon $w={n.check ? 18 : 25} $gap={n.check ? 7 : 6}>
          <Svg s={n.check ? 18 : 26}>{icons[n.icon]}</Svg>
        </TreeIcon>
        <TreeLabel $bold={n.kind === "bold"} $selected={n.kind === "selected"}>{n.label}</TreeLabel>
      </TreeRow>
    ))}
  </Tree>
);

/* ---------- report ---------- */

const facts = [
  ["Classification Algorithm:", "Parallelpiped (with Maximu"],
  ["Classification Input Channels:", "3,4"],
  ["Classification Training Channel:", "7"],
  ["Classification Result Channel:", "8"],
];

const stats = [
  ["Grass", "1", "7151", "0.68", "3.00", "1."],
  ["Clear Water", "2", "50414", "4.81", "3.00", "1."],
  ["Sediment Wate", "3", "12326", "1.18", "3.00", "1."],
  ["Conifers Fore", "4", "170095", "16.22", "3.00", "1."],
  ["  NULL", "0", "808590", "77.11", "", ""],
  ["", "Total", "1048576", "100.00", "", ""],
];

const ReportDialog = () => (
  <Dialog role="dialog" aria-label="Classification Report">
    <DialogTitle>
      <TitleIcon><Eye /></TitleIcon>
      <Title as="h2">Classification Report</Title>
      <Caption danger />
    </DialogTitle>
    <DialogBody>
      <ReportFrame>
        <ReportBox>
          <Report>
            <ReportLine>Time: 15:33 24-May-16</ReportLine>
            <ReportLine>File: H:\GIST8118\mod06\l7_rf_nvan.pix</ReportLine>
            <Facts>
              {facts.map(([k, v]) => (
                <React.Fragment key={k}><dt>{k}</dt><dd>{v}</dd></React.Fragment>
              ))}
            </Facts>
            <Stats>
              <colgroup>
                <col style={{ width: 155 }} /><col style={{ width: 78 }} /><col style={{ width: 133 }} />
                <col style={{ width: 111 }} /><col style={{ width: 100 }} /><col />
              </colgroup>
              <thead>
                <tr>{[" Name", "Code", "Pixels", "%Image", "Thres", "      Bi"].map((h) => <th key={h}>{h}</th>)}</tr>
              </thead>
              <tbody>
                {stats.map((r) => (
                  <tr key={r[2]}>{r.map((v, i) => <td key={i}>{i === 5 && v ? "      " + v : v}</td>)}</tr>
                ))}
              </tbody>
            </Stats>
            <ReportLine>{"  CONFUSION MATRIX"}</ReportLine>
          </Report>
          <VBar>
            <UpArrow aria-label="Scroll up"><Chevron turn={90} /></UpArrow>
            <Thumb $h={73}><ThumbMark turn={90} /></Thumb>
            <Spacer />
            <DownArrow aria-label="Scroll down"><Chevron turn={-90} /></DownArrow>
          </VBar>
          <HBar>
            <ArrowButton aria-label="Scroll left"><Chevron turn={0} /></ArrowButton>
            <Track><Thumb $pct={69}><ThumbMark /></Thumb></Track>
            <EndArrow aria-label="Scroll right"><Chevron turn={180} /></EndArrow>
          </HBar>
          <Corner />
        </ReportBox>
      </ReportFrame>
      <DialogFooter>
        <PushButton $w={45} aria-label="Help">
          <svg width="34" height="28" viewBox="0 0 34 28" fill="none" aria-hidden="true">
            <path d="M2 13L11 4l10 5-7 13-5-3-1 4-6-5z" fill="#3b8ee2" stroke="#1a4f8e" />
            <path d="M8 20l4 5 10-8V9l-8 12-4-2z" fill="#e8edf2" stroke="#456" />
            <path d="M12 21l1 3M15 19l1 3M18 16l1 3" stroke="#678" />
            <path d="M24 7c0-5 8-5 7 0 0 3-4 3-4 7M27 16v3" stroke="#222" strokeWidth="2.600" />
          </svg>
        </PushButton>
        <Spacer />
        <PushButton $w={89} $default>Save</PushButton>
        <PushButton $w={89}>Close</PushButton>
      </DialogFooter>
    </DialogBody>
  </Dialog>
);

export default function App() {
  return (
    <Window>
      <Global />
      <TitleBar>
        <TitleIcon><Eye /></TitleIcon>
        <Title>Focus - Unnamed Project - Classification Map</Title>
        <Caption />
      </TitleBar>
      <MenuBar>
        {["File", "Edit", "View", "Layer", "Analysis", "Tools", "Help"].map((m) => <MenuItem key={m}>{m}</MenuItem>)}
      </MenuBar>
      <Toolbar>{topTools.map((g, i) => <ToolGroup key={i} tools={g} />)}</Toolbar>
      <Toolbar>
        {lowTools.map((g, i) => <ToolGroup key={i} tools={g} />)}
        <More aria-label="More tools">»</More>
      </Toolbar>
      <Work>
        <SidePanel>
          <Tabs role="tablist">
            <Tab role="tab" $on>Maps</Tab>
            <Tab role="tab">Files</Tab>
          </Tabs>
          <TreeBox>
            <LayerTree />
            <HBar>
              <ArrowButton aria-label="Scroll left"><Chevron turn={0} /></ArrowButton>
              <Track><Thumb $pct={94}><ThumbMark /></Thumb></Track>
              <EndArrow aria-label="Scroll right"><Chevron turn={180} /></EndArrow>
            </HBar>
          </TreeBox>
        </SidePanel>
        <MapPane><ClassifiedMap /></MapPane>
      </Work>
      <StatusBar>
        <StatusDrop aria-label="Message log"><StatusCaret /></StatusDrop>
        <StatusRow>
          <StatusCell $upper />
          <StatusCell $w={255} $upper />
        </StatusRow>
        <span />
        <StatusRow>
          <StatusCell $w={165}>Scale: 235,000</StatusCell>
          <StatusCell $w={66}>x0.53</StatusCell>
          <Gap><StatusDrop aria-label="Coordinate format"><StatusCaret /></StatusDrop></Gap>
          <StatusCell $w={315}>497940.000E 5462040.000N</StatusCell>
          <StatusCell>{"P:  0 \"Class-00\""}</StatusCell>
        </StatusRow>
      </StatusBar>
      <ReportDialog />
    </Window>
  );
}
